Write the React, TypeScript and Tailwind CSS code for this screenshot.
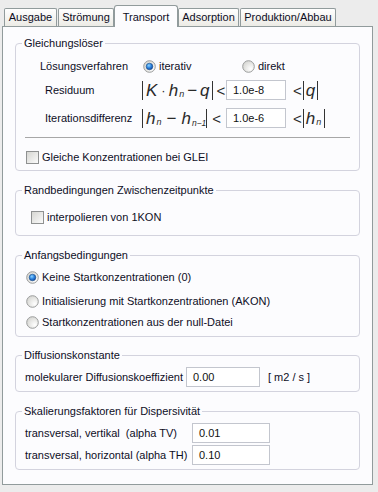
import React from "react";

const font = { fontFamily: '"Liberation Sans", Arial, sans-serif' };

const Radio = ({ checked }: { checked?: boolean }) => (
  <svg width="13" height="13" viewBox="0 0 13 13" className="shrink-0">
    <defs>
      <radialGradient id="rbg" cx="0.7" cy="0.7" r="0.8">
        <stop offset="0" stopColor="#ffffff" />
        <stop offset="1" stopColor="#d4d4d0" />
      </radialGradient>
      <radialGradient id="rdot" cx="0.4" cy="0.35" r="0.7">
        <stop offset="0" stopColor="#8fd4ff" />
        <stop offset="0.5" stopColor="#2e86e0" />
        <stop offset="1" stopColor="#0b3f9a" />
      </radialGradient>
    </defs>
    <circle cx="6.5" cy="6.5" r="5.8" fill="url(#rbg)" stroke="#9a9c9c" strokeWidth="1" />
    {checked && <circle cx="6.5" cy="6.5" r="3.3" fill="url(#rdot)" stroke="#1d4f86" strokeWidth="0.6" />}
  </svg>
);

const Check = () => (
  <span className="w-[13px] h-[13px] shrink-0 border border-[#8f9191] bg-gradient-to-br from-[#d6d6d2] to-[#fbfbfb]" />
);

const Bar = () => <span className="w-px h-[19px] bg-[#333] shrink-0" />;

const Sub = ({ children, size = "text-[9px]" }: { children: React.ReactNode; size?: string }) => (
  <span className={`ml-px ${size} self-end mb-[1px] italic`}>{children}</span>
);

const Input = ({ value, w }: { value: string; w: string }) => (
  <div className={`${w} h-[20px] border border-[#c3c6ce] bg-white flex items-center pl-[6px] text-[11px] text-[#111]`}>
    {value}
  </div>
);

const tabs = [
  { label: "Ausgabe", w: "w-[53px]", ml: "ml-[1px]" },
  { label: "Strömung", w: "w-[56px]", ml: "ml-[1px]" },
  { label: "Transport", w: "w-[64px]", ml: "ml-0", active: true },
  { label: "Adsorption", w: "w-[61px]", ml: "ml-0" },
  { label: "Produktion/Abbau", w: "w-[96px]", ml: "ml-[1px]" },
];

export default function App() {
  return (
    <div className="w-[378px] h-[492px] bg-[#ececec] pt-[5px] pl-[2px] text-[11px] text-[#0e0e1e] overflow-hidden" style={font}>
      {/* Tabs */}
      <div className="flex items-end h-[21px] pl-[1px]">
        {tabs.map((t) =>
          t.active ? (
            <div
              key={t.label}
              className={`${t.w} ${t.ml} h-[22px] -mb-px relative z-10 bg-[#fcfcfe] border border-b-0 border-[#919b9c] rounded-t-[3px] flex justify-center pt-[3px] text-[11px]`}
            >
              {t.label}
            </div>
          ) : (
            <div
              key={t.label}
              className={`${t.w} ${t.ml} h-[18px] bg-gradient-to-b from-[#ffffff] to-[#ecebe5] border border-b-0 border-[#919b9c] rounded-t-[2px] flex items-center justify-center text-[11px]`}
            >
              {t.label}
            </div>
          )
        )}
      </div>

      {/* Panel */}
      <div className="w-[371px] h-[459px] border border-[#919b9c] bg-[#fcfcfe] pt-[10px] pl-[12px]">
        {/* Gleichungslöser */}
        <fieldset className="w-[345px] border border-[#d3d3de] rounded-[4px] pt-[8px] pb-[6px]">
          <legend className="ml-[6px] px-[2px] leading-[13px]">Gleichungslöser</legend>
          <div className="flex items-center h-[16px] pl-[24px]">
            <span className="w-[103px]">Lösungsverfahren</span>
            <Radio checked />
            <span className="ml-[3px] w-[83px]">iterativ</span>
            <Radio />
            <span className="ml-[3px]">direkt</span>
          </div>

          <div className="flex items-center h-[20px] mt-[6px] pl-[29px]">
            <span className="w-[97px]">Residuum</span>
            <div className="flex items-center w-[84px] h-[20px] italic text-[17px] leading-none text-[#2a2a2a]">
              <Bar />
              <span className="ml-[3px]">K</span>
              <span className="ml-[4px] not-italic text-[13px]">·</span>
              <span className="ml-[3px]">h</span>
              <Sub>n</Sub>
              <span className="ml-[3px] not-italic">−</span>
              <span className="ml-[3px]">q</span>
              <span className="ml-[2px] flex"><Bar /></span>
              <span className="ml-[4px] not-italic text-[15px]">&lt;</span>
            </div>
            <Input value="1.0e-8" w="w-[60px]" />
            <span className="ml-[7px] text-[15px] leading-none text-[#2a2a2a]">&lt;</span>
            <span className="ml-[1px] flex items-center italic text-[17px] leading-none text-[#2a2a2a]">
              <Bar />
              <span className="ml-[2px]">q</span>
              <span className="ml-[2px] flex"><Bar /></span>
            </span>
          </div>

          <div className="flex items-center h-[20px] mt-[8px] pl-[29px]">
            <span className="w-[97px]">Iterationsdifferenz</span>
            <div className="flex items-center w-[84px] h-[20px] italic text-[17px] leading-none text-[#2a2a2a]">
              <Bar />
              <span className="ml-[3px]">h</span>
              <Sub>n</Sub>
              <span className="ml-[5px] not-italic">−</span>
              <span className="ml-[5px]">h</span>
              <Sub size="text-[8.5px]">n−1</Sub>
              <span className="ml-[0px] flex"><Bar /></span>
              <span className="ml-[5px] not-italic text-[15px]">&lt;</span>
            </div>
            <Input value="1.0e-6" w="w-[60px]" />
            <span className="ml-[7px] text-[15px] leading-none text-[#2a2a2a]">&lt;</span>
            <span className="ml-[1px] flex items-center italic text-[17px] leading-none text-[#2a2a2a]">
              <Bar />
              <span className="ml-[2px]">h</span>
              <Sub>n</Sub>
              <span className="ml-[3px] flex"><Bar /></span>
            </span>
          </div>

          <div className="h-px bg-[#a7a7a7] mx-[9px] mt-[9px]" />

          <div className="flex items-center h-[14px] mt-[12px] pl-[10px]">
            <Check />
            <span className="ml-[3px]">Gleiche Konzentrationen bei GLEI</span>
          </div>
        </fieldset>

        {/* Randbedingungen */}
        <fieldset className="w-[345px] mt-[13px] border border-[#d3d3de] rounded-[4px] pt-[13px] pb-[11px]">
          <legend className="ml-[6px] px-[2px] leading-[13px]">Randbedingungen Zwischenzeitpunkte</legend>
          <div className="flex items-center h-[14px] pl-[15px]">
            <Check />
            <span className="ml-[3px]">interpolieren von 1KON</span>
          </div>
        </fieldset>

        {/* Anfangsbedingungen */}
        <fieldset className="w-[345px] mt-[13px] border border-[#d3d3de] rounded-[4px] pt-[8px] pb-[7px]">
          <legend className="ml-[6px] px-[2px] leading-[13px]">Anfangsbedingungen</legend>
          <div className="flex items-center h-[14px] pl-[10px]">
            <Radio checked />
            <span className="ml-[3px]">Keine Startkonzentrationen (0)</span>
          </div>
          <div className="flex items-center h-[14px] mt-[10px] pl-[10px]">
            <Radio />
            <span className="ml-[3px]">Initialisierung mit Startkonzentrationen (AKON)</span>
          </div>
          <div className="flex items-center h-[14px] mt-[7px] pl-[10px]">
            <Radio />
            <span className="ml-[3px]">Startkonzentrationen aus der null-Datei</span>
          </div>
        </fieldset>

        {/* Diffusionskonstante */}
        <fieldset className="w-[345px] mt-[12px] border border-[#d3d3de] rounded-[4px] pt-[5px] pb-[4px]">
          <legend className="ml-[6px] px-[2px] leading-[13px]">Diffusionskonstante</legend>
          <div className="flex items-center h-[20px] pl-[9px]">
            <span className="w-[161px]">molekularer Diffusionskoeffizient</span>
            <Input value="0.00" w="w-[74px]" />
            <span className="ml-[8px]">[ m2 / s ]</span>
          </div>
        </fieldset>

        {/* Skalierungsfaktoren */}
        <fieldset className="w-[345px] mt-[13px] border border-[#d3d3de] rounded-[4px] pt-[5px] pb-[4px]">
          <legend className="ml-[6px] px-[2px] leading-[13px]">Skalierungsfaktoren für Dispersivität</legend>
          <div className="flex items-center h-[20px] pl-[9px]">
            <span className="w-[167px] whitespace-pre">transversal, vertikal  (alpha TV)</span>
            <Input value="0.01" w="w-[78px]" />
          </div>
          <div className="flex items-center h-[20px] mt-[2px] pl-[9px]">
            <span className="w-[167px]">transversal, horizontal (alpha TH)</span>
            <Input value="0.10" w="w-[78px]" />
          </div>
        </fieldset>
      </div>
    </div>
  );
}
